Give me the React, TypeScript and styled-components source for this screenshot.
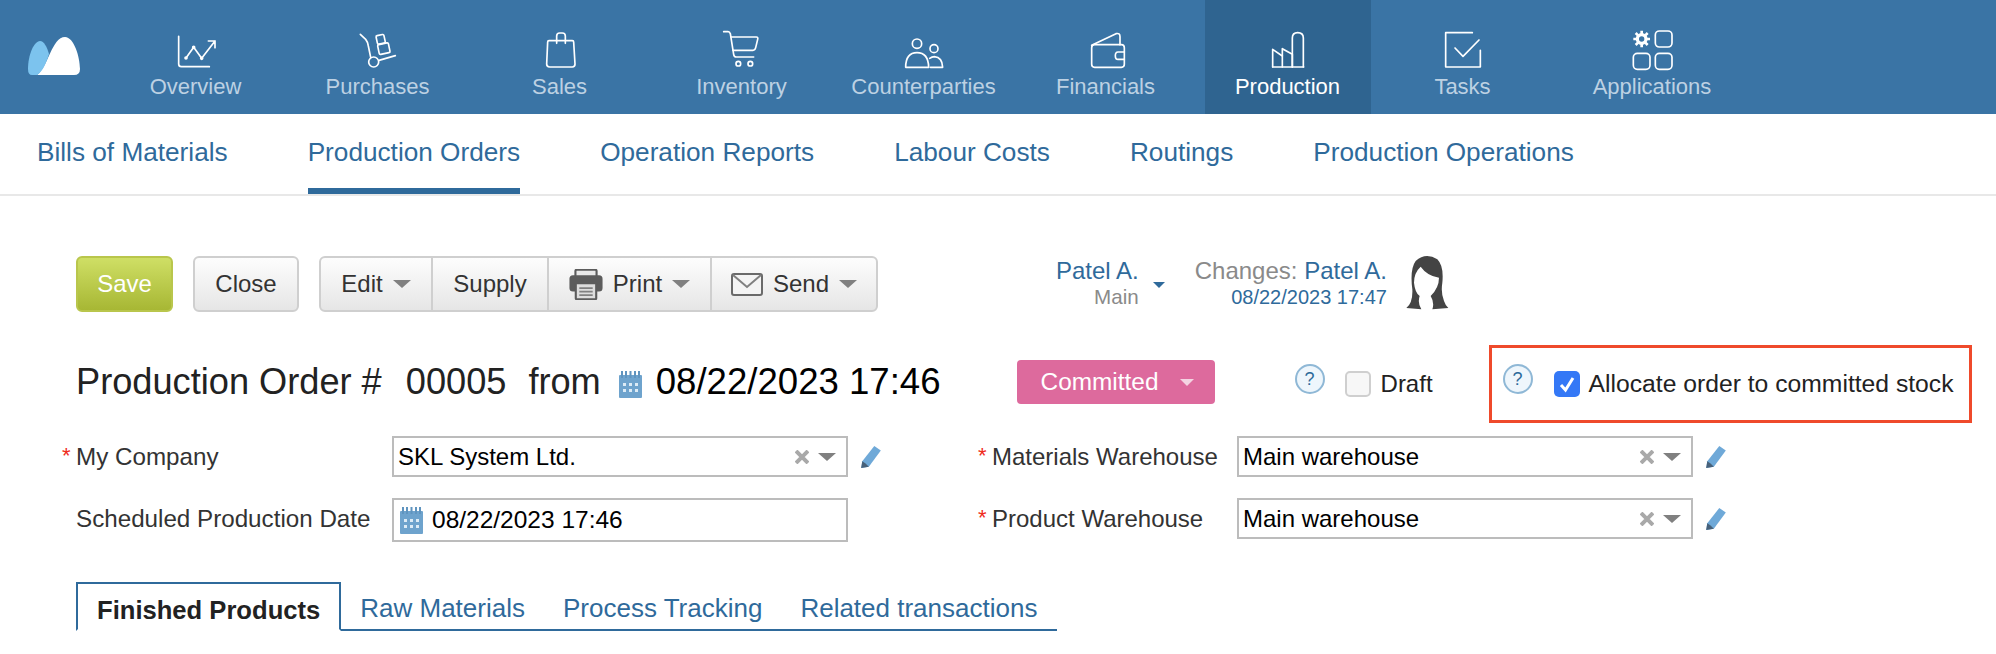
import React from "react";
import styled, { createGlobalStyle } from "styled-components";

const GlobalStyle = createGlobalStyle`
  html, body {
    margin: 0;
    padding: 0;
    background: #fff;
    overflow: hidden;
  }
  body {
    font-family: "Liberation Sans", Arial, sans-serif;
    color: #222;
  }
`;

const Page = styled.div`
  width: 1996px;
  height: 654px;
  overflow: hidden;
`;

/* top navigation */
const TopBar = styled.header`
  display: flex;
  height: 114px;
  background: #3a74a5;
`;

const LogoBox = styled.div`
  width: 112.5px;
  flex: none;
  padding: 37px 0 0 28px;
  box-sizing: border-box;
`;

const NavList = styled.nav`
  display: flex;
  gap: 16px;
`;

const NavItem = styled.a<{ $width?: number; $active?: boolean }>`
  display: flex;
  flex-direction: column;
  align-items: center;
  box-sizing: border-box;
  width: ${(p) => p.$width ?? 166}px;
  padding-top: 26px;
  background: ${(p) => (p.$active ? "#2f6490" : "transparent")};
  color: ${(p) => (p.$active ? "#fff" : "#bdd1e3")};
  font-size: 22px;
  line-height: 26px;
  white-space: nowrap;
`;

const NavIcon = styled.svg`
  display: block;
  height: 48px;
  overflow: visible;
  fill: none;
  stroke: #fff;
  stroke-width: 5;
  stroke-linecap: round;
  stroke-linejoin: round;
`;

/* sub navigation */
const SubNav = styled.nav`
  display: flex;
  gap: 80px;
  height: 80px;
  padding-left: 37px;
  border-bottom: 2px solid #e8e8e8;
`;

const SubLink = styled.a<{ $active?: boolean }>`
  box-sizing: border-box;
  height: 80px;
  line-height: 76px;
  font-size: 26.2px;
  color: #2f6a9b;
  white-space: nowrap;
  border-bottom: 6px solid ${(p) => (p.$active ? "#2f6a9b" : "transparent")};
`;

const Content = styled.main`
  padding-left: 76px;
`;

/* toolbar */
const ToolbarRow = styled.div`
  display: flex;
  align-items: stretch;
  gap: 20px;
  height: 56px;
  margin-top: 60px;
`;

const Button = styled.button`
  box-sizing: border-box;
  display: flex;
  align-items: center;
  justify-content: center;
  height: 56px;
  padding: 0;
  border: 2px solid #cfcfcf;
  border-radius: 6px;
  background: linear-gradient(#fdfdfd, #e6e6e6);
  font: 24px "Liberation Sans", Arial, sans-serif;
  color: #333;
`;

const SaveButton = styled(Button)`
  width: 97px;
  border-color: #b9c64c;
  background: linear-gradient(#cfdf65, #a7b734);
  color: #fff;
`;

const CloseButton = styled(Button)`
  width: 106px;
`;

const ButtonGroup = styled.div`
  box-sizing: border-box;
  display: flex;
  width: 559px;
  border: 2px solid #cfcfcf;
  border-radius: 6px;
  background: linear-gradient(#fdfdfd, #e6e6e6);
`;

const GroupItem = styled.div<{ $width: number; $gap?: number; $last?: boolean }>`
  box-sizing: border-box;
  display: flex;
  align-items: center;
  justify-content: center;
  gap: ${(p) => p.$gap ?? 10}px;
  width: ${(p) => p.$width}px;
  font-size: 24px;
  color: #333;
  border-right: ${(p) => (p.$last ? "none" : "2px solid #cfcfcf")};
`;

const Caret = styled.span<{ $size?: number; $color?: string }>`
  display: inline-block;
  flex: none;
  width: 0;
  height: 0;
  border-left: ${(p) => (p.$size ?? 18) / 2}px solid transparent;
  border-right: ${(p) => (p.$size ?? 18) / 2}px solid transparent;
  border-top: ${(p) => ((p.$size ?? 18) / 2) * 0.95}px solid ${(p) => p.$color ?? "#808080"};
`;

const OwnerBlock = styled.div`
  display: flex;
  flex-direction: column;
  align-items: flex-end;
  margin-left: 158px;
  padding-top: 2px;
`;

const OwnerName = styled.span`
  font-size: 24px;
  line-height: 26px;
  color: #2f6a9b;
  white-space: nowrap;
`;

const OwnerSub = styled.span<{ $blue?: boolean }>`
  font-size: ${(p) => (p.$blue ? 20 : 20.6)}px;
  line-height: 26px;
  color: ${(p) => (p.$blue ? "#2f6a9b" : "#8a8a8a")};
  white-space: nowrap;
`;

const OwnerCaret = styled.div`
  display: flex;
  align-items: center;
  margin: 18px 0 0 -6px;
  height: 22px;
`;

const ChangesBlock = styled(OwnerBlock)`
  margin-left: 10px;
`;

const ChangesLabel = styled.span`
  color: #8a8a8a;
`;

const Avatar = styled.svg`
  display: block;
  width: 70px;
  height: 70px;
  margin: -10px 0 0 -18px;
`;

/* title row */
const TitleRow = styled.div`
  display: flex;
  align-items: center;
  height: 78px;
  margin-top: 33px;
`;

const TitleText = styled.span<{ $gap?: number; $dark?: boolean }>`
  margin-left: ${(p) => p.$gap ?? 0}px;
  font-size: ${(p) => (p.$dark ? 36.6 : 36.2)}px;
  line-height: 44px;
  color: ${(p) => (p.$dark ? "#000" : "#222")};
  white-space: nowrap;
  position: relative;
  top: -2px;
`;

const StatusButton = styled.div`
  display: flex;
  align-items: center;
  box-sizing: border-box;
  width: 198px;
  height: 44px;
  margin: -4px 0 0 76px;
  padding-left: 24px;
  gap: 22px;
  border-radius: 4px;
  background: #dd6a9d;
  color: #fff;
  font-size: 24.4px;
`;

const Help = styled.span`
  flex: none;
  box-sizing: border-box;
  display: flex;
  align-items: center;
  justify-content: center;
  width: 30px;
  height: 30px;
  margin-bottom: 10px;
  border: 2px solid #8fb8d6;
  border-radius: 50%;
  background: #eef6fc;
  color: #2c6a9a;
  font-size: 18px;
`;

const Check = styled.span<{ $checked?: boolean }>`
  flex: none;
  box-sizing: border-box;
  display: flex;
  align-items: center;
  justify-content: center;
  width: 26px;
  height: 26px;
  border: ${(p) => (p.$checked ? "none" : "2px solid #cfcfcf")};
  border-radius: 5px;
  background: ${(p) => (p.$checked ? "#3478f6" : "#f7f7f7")};
`;

const CheckText = styled.span<{ $large?: boolean }>`
  margin-left: ${(p) => (p.$large ? 9 : 10)}px;
  font-size: ${(p) => (p.$large ? 24.7 : 24)}px;
  color: #222;
  white-space: nowrap;
`;

const DraftGroup = styled.div`
  display: flex;
  align-items: center;
  margin-left: 80px;
`;

const DraftHelp = styled.div`
  margin-right: 20px;
  display: flex;
`;

const AllocateBox = styled.div`
  box-sizing: border-box;
  display: flex;
  align-items: center;
  width: 483px;
  height: 78px;
  margin-left: 56px;
  padding-left: 11px;
  border: 3px solid #ef4a2b;
`;

const AllocateHelp = styled.div`
  display: flex;
  margin-right: 21px;
`;

/* form */
const FormRow = styled.div<{ $top: number }>`
  display: flex;
  align-items: flex-start;
  margin-top: ${(p) => p.$top}px;
`;

const Field = styled.div<{ $offset?: number }>`
  display: flex;
  align-items: flex-start;
  margin-left: ${(p) => p.$offset ?? 0}px;
`;

const Star = styled.span`
  width: 14px;
  margin-left: -14px;
  color: #ef2b1d;
  font-size: 22px;
  line-height: 40px;
`;

const FieldLabel = styled.label<{ $width: number }>`
  width: ${(p) => p.$width}px;
  font-size: ${(p) => (p.$width > 300 ? 24.2 : 24)}px;
  line-height: 41px;
  color: #333;
  white-space: nowrap;
`;

const SelectBox = styled.div<{ $height?: number; $date?: boolean }>`
  box-sizing: border-box;
  display: flex;
  align-items: center;
  width: 456px;
  height: ${(p) => p.$height ?? 41}px;
  padding: 0 10px 0 ${(p) => (p.$date ? 6 : 4)}px;
  border: 2px solid #bcbcbc;
  background: #fff;
  font-size: 24px;
  color: #000;
`;

const SelectValue = styled.span`
  flex: 1;
  white-space: nowrap;
`;

const ClearIcon = styled.svg`
  display: block;
  width: 14px;
  height: 14px;
  margin-right: 9px;
  stroke: #a9a9a9;
  stroke-width: 4;
`;

const EditIcon = styled.svg`
  display: block;
  width: 22px;
  height: 24px;
  margin: 9px 0 0 12px;
`;

const DateIcon = styled.svg`
  display: block;
  flex: none;
  width: 23px;
  height: 27px;
`;

const DateValue = styled.span`
  margin-left: 9px;
  font-size: 24.5px;
  white-space: nowrap;
`;

const TitleDateIcon = styled(DateIcon)`
  margin-left: 18px;
  margin-right: 14px;
`;

/* tabs */
const Tabs = styled.div`
  box-sizing: border-box;
  display: flex;
  width: 981px;
  height: 49px;
  margin-top: 40px;
  border-bottom: 2px solid #2f6a9b;
`;

const Tab = styled.a<{ $active?: boolean }>`
  box-sizing: border-box;
  height: ${(p) => (p.$active ? 49 : 47)}px;
  padding: 0 19px;
  border: ${(p) => (p.$active ? "2px solid #2f6a9b" : "none")};
  border-bottom: ${(p) => (p.$active ? "2px solid #fff" : "none")};
  background: #fff;
  font-size: ${(p) => (p.$active ? 25.6 : 26)}px;
  font-weight: ${(p) => (p.$active ? 700 : 400)};
  line-height: 52px;
  color: ${(p) => (p.$active ? "#222" : "#2f6a9b")};
  white-space: nowrap;
`;

const Logo = () => (
  <svg width="52" height="38" viewBox="0 0 52 38">
    <path d="M9 38C20 30 24 0 37 0C46 0 52 20 52 32Q52 38 46 38Z" fill="#fff" />
    <path d="M4 38Q0 38 0 32C0 18 6 4 12 4C16 4 19 10 21 17C18 27 14 35 9 38Z" fill="#7cc3ee" />
  </svg>
);

const icon = (x: number, children: React.ReactNode, w = 120) => (
  <NavIcon viewBox={`${x} 0 ${w} 144`} style={{ width: w / 3 }}>
    {children}
  </NavIcon>
);

const navItems: { label: string; width?: number; active?: boolean; art: React.ReactNode }[] = [
  {
    label: "Overview",
    art: icon(
      15,
      <>
        <path d="M23 31V114Q23 122 31 122H115" />
        <path d="M45 96L68 64L92 97L132 45M112 45H132V65" />
        <circle cx="45" cy="96" r="3" fill="#fff" />
        <circle cx="68" cy="64" r="3" fill="#fff" />
        <circle cx="92" cy="97" r="3" fill="#fff" />
      </>
    ),
  },
  {
    label: "Purchases",
    art: icon(
      561,
      <>
        <path d="M568 25L584 40Q590 47 592 60L599 94" />
        <circle cx="608" cy="108" r="15" />
        <path d="M624 103L673 89" />
        <rect x="617" y="27" width="24" height="26" rx="4" transform="rotate(-12 629 40)" />
        <rect x="622" y="53" width="33" height="30" rx="4" transform="rotate(-12 638 68)" />
      </>
    ),
  },
  {
    label: "Sales",
    art: icon(
      1107,
      <>
        <path d="M1134 44H1204Q1208 44 1208 48L1212 114Q1212 123 1204 123H1136Q1127 123 1127 114L1130 48Q1130 44 1134 44Z" />
        <path d="M1157 52V30Q1157 21 1166 21H1174Q1183 21 1183 30V52" />
      </>
    ),
  },
  {
    label: "Inventory",
    art: icon(
      15,
      <>
        <path d="M20 17H33Q38 17 40 23L50 85Q51 93 58 93H110" />
        <path d="M42 33H118Q124 33 122 40L116 65Q114 73 108 73H48" />
        <circle cx="64" cy="113" r="7" />
        <circle cx="100" cy="113" r="7" />
      </>
    ),
  },
  {
    label: "Counterparties",
    art: icon(
      561,
      <>
        <circle cx="600" cy="53" r="14" />
        <path d="M566 124Q566 80 600 80Q634 80 635 124Z" />
        <circle cx="651" cy="68" r="12" />
        <path d="M640 124H677Q676 94 652 92Q645 92 638 97" />
      </>
    ),
  },
  {
    label: "Financials",
    art: icon(
      1110,
      <>
        <rect x="1127" y="56" width="98" height="68" rx="9" />
        <path d="M1127 58L1200 23Q1212 20 1212 32V56" />
        <path d="M1225 78H1206Q1198 78 1198 89Q1198 100 1206 100H1225" />
      </>
    ),
  },
  {
    label: "Production",
    active: true,
    art: icon(
      9,
      <>
        <path d="M23 123V70L52 90V123" />
        <path d="M52 90V68L82 85V123" />
        <path d="M82 123V36Q82 20 98 20Q115 20 115 36V123" />
        <path d="M23 123H116" />
      </>
    ),
  },
  {
    label: "Tasks",
    width: 152,
    art: icon(
      534,
      <>
        <path d="M622 20H542V123H646V73" />
        <path d="M570 66L594 91L642 42" />
      </>
    ),
  },
  {
    label: "Applications",
    width: 195,
    art: icon(
      1096,
      <>
        <rect x="1172" y="15" width="50" height="48" rx="12" />
        <rect x="1106" y="82" width="50" height="48" rx="12" />
        <rect x="1172" y="82" width="50" height="48" rx="12" />
        <circle cx="1131" cy="39" r="13" strokeWidth="10" />
        <path
          d="M1131 14V24M1131 54V64M1106 39H1116M1146 39H1156M1113 21L1120 28M1142 50L1149 57M1149 21L1142 28M1120 50L1113 57"
          strokeWidth="8"
          strokeLinecap="butt"
        />
      </>,
      130
    ),
  },
];

const subLinks = [
  "Bills of Materials",
  "Production Orders",
  "Operation Reports",
  "Labour Costs",
  "Routings",
  "Production Operations",
];

const PrintIcon = () => (
  <svg width="34" height="31" viewBox="28 40 94 88" style={{ flex: "none" }}>
    <rect x="45" y="42" width="60" height="22" rx="4" fill="#e8e8e8" stroke="#5c5c5c" strokeWidth="6" />
    <rect x="28" y="58" width="94" height="46" rx="10" fill="#5c5c5c" />
    <rect x="46" y="80" width="58" height="46" rx="3" fill="#ddd" stroke="#5c5c5c" strokeWidth="6" />
    <path d="M56 94H94M56 104H94M56 114H94" stroke="#808080" strokeWidth="5" />
  </svg>
);

const MailIcon = () => (
  <svg width="32" height="23" viewBox="0 0 32 23" style={{ flex: "none" }}>
    <rect x="1" y="1" width="30" height="21" rx="2" fill="#f4f4f4" stroke="#6a6a6a" strokeWidth="2" />
    <path d="M2 2L16 14L30 2" fill="none" stroke="#808080" strokeWidth="2" />
  </svg>
);

const Calendar = () => (
  <>
    <rect x="0" y="4" width="23" height="23" rx="1" fill="#6ea3cd" />
    <path d="M3 0V7M7 0V7M11.5 0V7M16 0V7M20 0V7" stroke="#5f94bf" strokeWidth="2" />
    <path
      d="M4 12h3v3H4zM10 12h3v3h-3zM16 12h3v3h-3zM4 18h3v3H4zM10 18h3v3h-3zM16 18h3v3h-3z"
      fill="#dcebf6"
    />
  </>
);

const Pencil = () => (
  <EditIcon viewBox="0 0 20 22">
    <path d="M13 1L19 5L8 20L1 21L2 15Z" fill="#6fa9d8" />
    <path d="M2 15L1 21L8 20L5 17Z" fill="#47617a" />
  </EditIcon>
);

const Clear = () => (
  <ClearIcon viewBox="0 0 14 14">
    <path d="M1 1L13 13M13 1L1 13" />
  </ClearIcon>
);

const CheckMark = () => (
  <svg width="18" height="18" viewBox="0 0 18 18">
    <path d="M3 10L7.5 15L15 3" fill="none" stroke="#fff" strokeWidth="3" />
  </svg>
);

export default function App() {
  return (
    <Page>
      <GlobalStyle />
      <TopBar>
        <LogoBox>
          <Logo />
        </LogoBox>
        <NavList>
          {navItems.map((item) => (
            <NavItem key={item.label} $width={item.width} $active={item.active}>
              {item.art}
              {item.label}
            </NavItem>
          ))}
        </NavList>
      </TopBar>

      <SubNav>
        {subLinks.map((label) => (
          <SubLink key={label} $active={label === "Production Orders"}>
            {label}
          </SubLink>
        ))}
      </SubNav>

      <Content>
        <ToolbarRow>
          <SaveButton>Save</SaveButton>
          <CloseButton>Close</CloseButton>
          <ButtonGroup>
            <GroupItem $width={112}>
              Edit <Caret />
            </GroupItem>
            <GroupItem $width={116}>Supply</GroupItem>
            <GroupItem $width={163} $gap={10}>
              <PrintIcon />
              Print
              <Caret />
            </GroupItem>
            <GroupItem $width={164} $last>
              <MailIcon />
              Send
              <Caret />
            </GroupItem>
          </ButtonGroup>

          <OwnerBlock>
            <OwnerName>Patel A.</OwnerName>
            <OwnerSub>Main</OwnerSub>
          </OwnerBlock>
          <OwnerCaret>
            <Caret $size={13} $color="#2f6a9b" />
          </OwnerCaret>
          <ChangesBlock>
            <OwnerName>
              <ChangesLabel>Changes:</ChangesLabel> Patel A.
            </OwnerName>
            <OwnerSub $blue>08/22/2023 17:47</OwnerSub>
          </ChangesBlock>
          <Avatar viewBox="0 0 210 210">
            <path
              d="M52 186Q72 170 70 130Q62 70 80 45Q110 18 145 40Q165 60 160 110Q155 140 165 165Q170 180 178 186L130 190Q137 170 125 150Q150 125 150 95Q115 90 95 62Q75 80 75 110Q78 140 92 150Q85 170 97 190Z"
              fill="#444"
            />
          </Avatar>
        </ToolbarRow>

        <TitleRow>
          <TitleText>Production Order #</TitleText>
          <TitleText $gap={24}>00005</TitleText>
          <TitleText $gap={22}>from</TitleText>
          <TitleDateIcon viewBox="0 0 23 27">
            <Calendar />
          </TitleDateIcon>
          <TitleText $dark>08/22/2023 17:46</TitleText>
          <StatusButton>
            Committed
            <Caret $size={15} $color="#f4d3e2" />
          </StatusButton>
          <DraftGroup>
            <DraftHelp>
              <Help>?</Help>
            </DraftHelp>
            <Check />
            <CheckText>Draft</CheckText>
          </DraftGroup>
          <AllocateBox>
            <AllocateHelp>
              <Help>?</Help>
            </AllocateHelp>
            <Check $checked>
              <CheckMark />
            </Check>
            <CheckText $large>Allocate order to committed stock</CheckText>
          </AllocateBox>
        </TitleRow>

        <FormRow $top={13}>
          <Field>
            <Star>*</Star>
            <FieldLabel $width={316}>My Company</FieldLabel>
            <SelectBox>
              <SelectValue>SKL System Ltd.</SelectValue>
              <Clear />
              <Caret />
            </SelectBox>
            <Pencil />
          </Field>
          <Field $offset={110}>
            <Star>*</Star>
            <FieldLabel $width={245}>Materials Warehouse</FieldLabel>
            <SelectBox>
              <SelectValue>Main warehouse</SelectValue>
              <Clear />
              <Caret />
            </SelectBox>
            <Pencil />
          </Field>
        </FormRow>

        <FormRow $top={21}>
          <Field>
            <FieldLabel $width={316}>Scheduled Production Date</FieldLabel>
            <SelectBox $height={44} $date>
              <DateIcon viewBox="0 0 23 27">
                <Calendar />
              </DateIcon>
              <DateValue>08/22/2023 17:46</DateValue>
            </SelectBox>
          </Field>
          <Field $offset={144}>
            <Star>*</Star>
            <FieldLabel $width={245}>Product Warehouse</FieldLabel>
            <SelectBox>
              <SelectValue>Main warehouse</SelectValue>
              <Clear />
              <Caret />
            </SelectBox>
            <Pencil />
          </Field>
        </FormRow>

        <Tabs>
          <Tab $active>Finished Products</Tab>
          <Tab>Raw Materials</Tab>
          <Tab>Process Tracking</Tab>
          <Tab>Related transactions</Tab>
        </Tabs>
      </Content>
    </Page>
  );
}
